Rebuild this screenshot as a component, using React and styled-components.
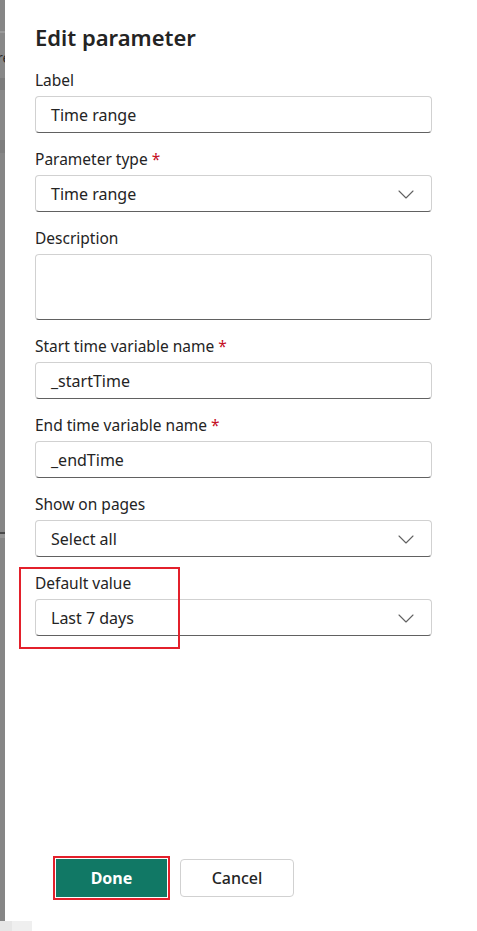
import React from 'react';
import styled, { createGlobalStyle } from 'styled-components';

const GlobalStyle = createGlobalStyle`
  html, body {
    margin: 0;
    padding: 0;
    background: #ffffff;
  }
  body {
    font-family: "Noto Sans", "Open Sans", Arial, sans-serif;
    color: #242424;
  }
`;

const Page = styled.div`
  display: flex;
  flex-direction: column;
  width: 477px;
  height: 931px;
  overflow: hidden;
`;

const Main = styled.div`
  display: flex;
  flex: 1;
  min-height: 0;
`;

const Backdrop = styled.div`
  width: 5px;
  flex-shrink: 0;
  background: #868686;
  display: flex;
  flex-direction: column;
  overflow: hidden;
`;

const BackdropBand = styled.div`
  height: ${({ h }) => h}px;
  flex-shrink: 0;
  background: ${({ tone }) => tone || 'transparent'};
  font-size: 14px;
  line-height: ${({ h }) => h}px;
  color: #2a2a2a;
  white-space: nowrap;
  text-indent: -3px;
`;

const BottomStrip = styled.div`
  height: 10px;
  display: flex;
`;

const StripCell = styled.div`
  width: ${({ w }) => w}px;
  background: ${({ tone }) => tone};
`;

const Panel = styled.div`
  flex: 1;
  background: #ffffff;
  display: flex;
  flex-direction: column;
  padding: 22px 45px 24px 30px;
`;

const Title = styled.h2`
  margin: 0 0 18px;
  font-size: 22px;
  line-height: 30px;
  font-weight: 600;
  color: #242424;
`;

const Field = styled.div`
  position: relative;
  display: flex;
  flex-direction: column;
  margin-bottom: 16px;
`;

const Label = styled.label`
  font-size: 15.5px;
  line-height: 20px;
  padding-bottom: 6px;
  color: #242424;
`;

const Required = styled.span`
  color: #c50f1f;
  margin-left: 4px;
`;

const Control = styled.div`
  display: flex;
  align-items: center;
  justify-content: space-between;
  box-sizing: border-box;
  height: ${({ tall }) => (tall ? 66 : 37)}px;
  padding: 0 16px 0 15px;
  border: 1px solid #d1d1d1;
  border-bottom-color: #616161;
  border-radius: 4px;
  font-size: 16px;
  color: #242424;
  background: #ffffff;
`;

const Chevron = () => (
  <svg width="18" height="18" viewBox="0 0 18 18" fill="none">
    <path d="M2 6 L9 13 L16 6" stroke="#616161" strokeWidth="1.1" strokeLinecap="round" strokeLinejoin="round" />
  </svg>
);

const Highlight = styled.div`
  position: absolute;
  left: -16px;
  top: -6px;
  width: 161px;
  height: 82px;
  box-sizing: border-box;
  border: 2px solid #e3202b;
  pointer-events: none;
`;

const Footer = styled.div`
  margin-top: auto;
  display: flex;
  gap: 13px;
  padding-left: 21px;
`;

const Button = styled.button`
  box-sizing: border-box;
  height: 38px;
  width: ${({ w }) => w}px;
  font-family: inherit;
  font-size: 16px;
  font-weight: ${({ primary }) => (primary ? 700 : 500)};
  color: ${({ primary }) => (primary ? '#ffffff' : '#242424')};
  background: ${({ primary }) => (primary ? '#117865' : '#ffffff')};
  border: 1px solid ${({ primary }) => (primary ? '#117865' : '#d1d1d1')};
  outline: ${({ marked }) => (marked ? '2px solid #e3202b' : 'none')};
  outline-offset: 1px;
  border-radius: ${({ marked }) => (marked ? 0 : 4)}px;
`;

const fields = [
  { label: 'Label', value: 'Time range' },
  { label: 'Parameter type', value: 'Time range', required: true, select: true },
  { label: 'Description', value: '', tall: true },
  { label: 'Start time variable name', value: '_startTime', required: true },
  { label: 'End time variable name', value: '_endTime', required: true },
  { label: 'Show on pages', value: 'Select all', select: true },
  { label: 'Default value', value: 'Last 7 days', select: true, marked: true },
];

export default function App() {
  return (
    <Page>
      <GlobalStyle />
      <Main>
        <Backdrop>
          <BackdropBand h={31} />
          <BackdropBand h={2} tone="#9a9a9a" />
          <BackdropBand h={17} tone="#888888" />
          <BackdropBand h={16} tone="#888888">re</BackdropBand>
          <BackdropBand h={12} tone="#888888" />
          <BackdropBand h={12} tone="#7c7c7c" />
          <BackdropBand h={50} tone="#888888" />
          <BackdropBand h={13} tone="#7e7e7e" />
          <BackdropBand h={379} tone="#868686" />
          <BackdropBand h={2} tone="#4a4a4a" />
          <BackdropBand h={4} tone="#959595" />
        </Backdrop>
        <Panel>
          <Title>Edit parameter</Title>
          {fields.map((f) => (
            <Field key={f.label}>
              <Label>
                {f.label}
                {f.required && <Required>*</Required>}
              </Label>
              <Control tall={f.tall}>
                <span>{f.value}</span>
                {f.select && <Chevron />}
              </Control>
              {f.marked && <Highlight />}
            </Field>
          ))}
          <Footer>
            <Button primary marked w={111}>Done</Button>
            <Button w={114}>Cancel</Button>
          </Footer>
        </Panel>
      </Main>
      <BottomStrip>
        <StripCell w={12} tone="#e6e6e6" />
        <StripCell w={20} tone="#efefef" />
        <StripCell w={445} tone="#ffffff" />
      </BottomStrip>
    </Page>
  );
}
